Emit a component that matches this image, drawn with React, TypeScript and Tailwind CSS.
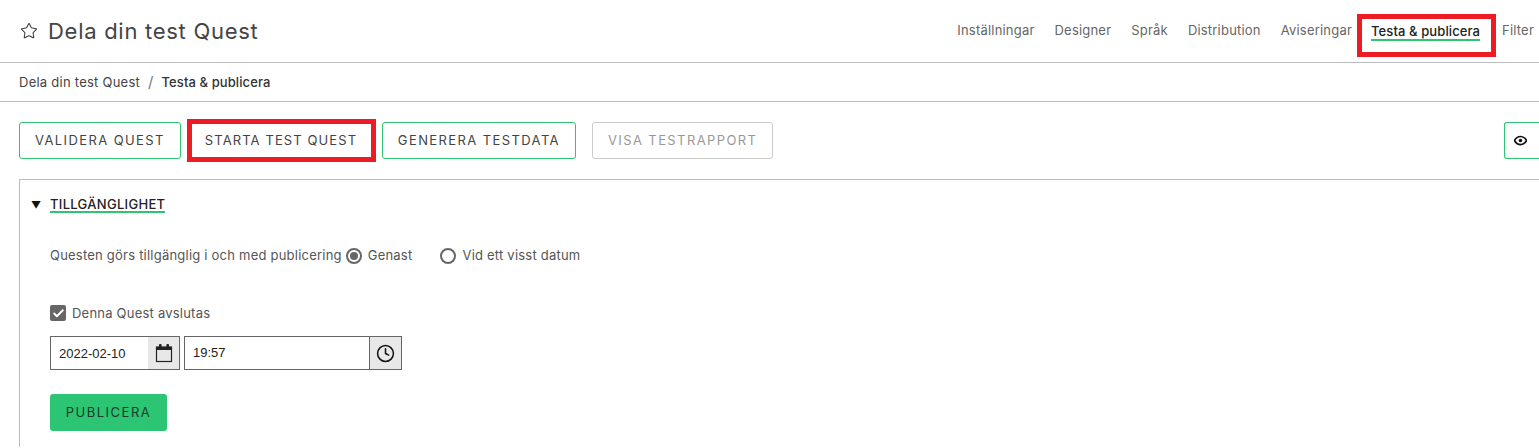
import React from "react";
import { Star, Clock, Check } from "lucide-react";

const font = "font-['Inter','Liberation_Sans',sans-serif]";

const navItems = ["Inställningar", "Designer", "Språk", "Distribution", "Aviseringar"];

const Header = () => (
  <header className="flex h-[63px] items-center justify-between border-b border-[#bdbdbd] pl-[20px] pr-[5px]">
    <div className="flex items-center gap-[10px]">
      <Star className="h-[18px] w-[18px] text-[#3c3c3c]" strokeWidth={1.4} />
      <h1 className="text-[22px] leading-none tracking-[0.72px] text-[#444]">Dela din test Quest</h1>
    </div>
    <nav className="flex items-center text-[13px] tracking-[0.2px] text-[#666]">
      <div className="flex items-center gap-[20px]">
        {navItems.map((item) => (
          <a key={item}>{item}</a>
        ))}
      </div>
      <div className="ml-[5px] mr-[6px] mt-[9px] flex h-[43px] items-start border-[5px] border-[#ed1c24] pl-[9px] pr-[11px] pt-[5px]">
        <a className="border-b-2 border-[#2ec471] font-medium leading-[15px] tracking-[0.1px] text-[#222]">Testa &amp; publicera</a>
      </div>
      <a>Filter</a>
    </nav>
  </header>
);

const Breadcrumb = () => (
  <div className="flex h-[39px] items-center gap-[8px] border-b border-[#bdbdbd] pl-[19px] pt-[1px] text-[13px] text-[#444]">
    <span className="tracking-[0.25px]">Dela din test Quest</span>
    <span className="text-[15px] text-[#777]">/</span>
    <span className="font-medium tracking-[0.1px] text-[#333]">Testa &amp; publicera</span>
  </div>
);

const outlineBtn = "flex h-[37px] items-center rounded-[3px] border border-[#2ec471] px-[15px] text-[13px] tracking-[1.4px] text-[#444]";

const Toolbar = () => (
  <div className="flex h-[77px] items-center pl-[19px]">
    <button className={outlineBtn}>VALIDERA QUEST</button>
    <button className="ml-[6px] flex h-[43px] w-[189px] items-center border-[5px] border-[#ed1c24] pl-[13px] text-[13px] tracking-[1.1px] text-[#444]">
      STARTA TEST QUEST
    </button>
    <button className={`ml-[6px] ${outlineBtn}`}>GENERERA TESTDATA</button>
    <button className="ml-[16px] flex h-[37px] items-center rounded-[3px] border border-[#ccc] px-[15px] text-[13px] tracking-[1.4px] text-[#999]">
      VISA TESTRAPPORT
    </button>
    <button className="ml-auto flex h-[37px] w-[35px] items-center rounded-l-[3px] border border-r-0 border-[#2ec471] pl-[9px]">
      <svg viewBox="0 0 16 16" className="h-[13px] w-[13px]">
        <path d="M0.5 8C2.5 4.5 5 3 8 3s5.5 1.5 7.5 5c-2 3.5-4.5 5-7.5 5s-5.5-1.5-7.5-5z" fill="none" stroke="#111" strokeWidth="2" />
        <circle cx="8" cy="8" r="2.2" fill="#111" />
      </svg>
    </button>
  </div>
);

const Radio = ({ checked, label }: { checked?: boolean; label: string }) => (
  <label className="flex items-center gap-[6px]">
    <span className="flex h-[16px] w-[16px] items-center justify-center rounded-full border-2 border-[#666]">
      {checked && <span className="h-[8px] w-[8px] rounded-full bg-[#666]" />}
    </span>
    {label}
  </label>
);

const CalendarIcon = () => (
  <svg viewBox="0 0 18 20" className="h-[20px] w-[18px]">
    <rect x="1.5" y="4" width="15" height="14.5" fill="none" stroke="#222" strokeWidth="1.2" />
    <rect x="1.5" y="4" width="15" height="3" fill="#222" />
    <rect x="4" y="1" width="2.6" height="5" rx="1" fill="#222" />
    <rect x="11.4" y="1" width="2.6" height="5" rx="1" fill="#222" />
  </svg>
);

const Panel = () => (
  <section className="ml-[19px] h-[268px] border-l border-t border-[#bdbdbd] pl-[11px] text-[13px] tracking-[0.22px] text-[#555]">
    <div className="flex items-center pt-[17px]">
      <span className="w-[19px] text-[10px] leading-none text-[#111]">▼</span>
      <h2 className="border-b-2 border-[#2ec471] text-[13px] font-medium leading-[14px] tracking-[0.3px] text-[#222]">TILLGÄNGLIGHET</h2>
    </div>

    <div className="ml-[19px] mt-[33px] flex items-center">
      <span className="mr-[4px]">Questen görs tillgänglig i och med publicering</span>
      <Radio checked label="Genast" />
      <span className="w-[28px]" />
      <Radio label="Vid ett visst datum" />
    </div>

    <div className="ml-[19px] mt-[38px] flex items-center gap-[6px]">
      <span className="flex h-[16px] w-[16px] items-center justify-center rounded-[2px] bg-[#666]">
        <Check className="h-[13px] w-[13px] text-white" strokeWidth={3.5} />
      </span>
      Denna Quest avslutas
    </div>

    <div className="ml-[19px] mt-[13px] flex gap-[4px] font-['Liberation_Sans',sans-serif] text-[13px] tracking-normal text-[#222]">
      <div className="flex h-[34px] w-[130px] border border-[#666]">
        <span className="flex flex-1 items-center pl-[8px] pt-[1px]">2022-02-10</span>
        <span className="flex w-[31px] items-center justify-center bg-[#e8e8e8]">
          <CalendarIcon />
        </span>
      </div>
      <div className="flex h-[34px] w-[218px] border border-[#666]">
        <span className="flex flex-1 items-center pl-[8px]">19:57</span>
        <span className="flex w-[32px] items-center justify-center border-l border-[#666] bg-[#e8e8e8]">
          <Clock className="h-[19px] w-[19px] text-[#111]" strokeWidth={1.9} />
        </span>
      </div>
    </div>

    <button className="ml-[19px] mt-[24px] flex h-[37px] w-[117px] items-center justify-center rounded-[3px] bg-[#2cc573] text-[13px] tracking-[1.5px] text-[#1d3b2a]">
      PUBLICERA
    </button>
  </section>
);

export default function App() {
  return (
    <div className={`flex h-[448px] w-[1539px] flex-col overflow-hidden bg-white ${font}`}>
      <Header />
      <Breadcrumb />
      <Toolbar />
      <Panel />
    </div>
  );
}
